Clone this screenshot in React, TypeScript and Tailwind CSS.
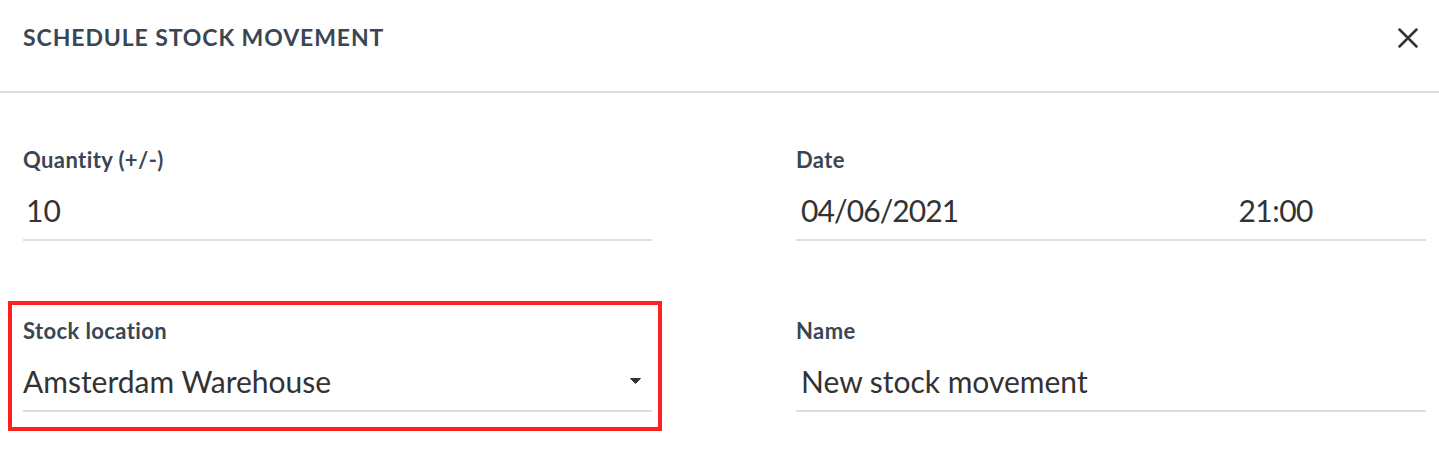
const font = { fontFamily: "Lato, 'Open Sans', sans-serif" };

function Field({ label, children }: { label: string; children: React.ReactNode }) {
  return (
    <div className="flex flex-col">
      <label className="text-[22px] font-bold leading-[24px] tracking-[0.4px] text-[#3a4654]">{label}</label>
      <div className="mt-[20px] flex h-[49px] items-center border-b-2 border-[#dedede] pb-[11px] text-[30px] leading-[36px] text-[#333]">
        {children}
      </div>
    </div>
  );
}

export default function App() {
  return (
    <div className="h-[466px] w-[1439px] bg-white" style={font}>
      {/* Header */}
      <div className="flex h-[93px] items-center justify-between border-b-2 border-[#dedede] pl-[23px] pr-[21px]">
        <h2 className="pb-[16px] text-[23px] font-bold uppercase tracking-[0.9px] text-[#3a4654]">
          Schedule stock movement
        </h2>
        <button className="pb-[16px] text-[#333]">
          <svg width="20" height="20" viewBox="0 0 20 20" fill="none" stroke="currentColor" strokeWidth="2.5" strokeLinecap="round">
            <path d="M1.5 1.5l17 17M18.5 1.5l-17 17" />
          </svg>
        </button>
      </div>

      {/* Body */}
      <div className="grid grid-cols-[629px_630px] gap-x-[144px] gap-y-[78px] pl-[23px] pt-[55px]">
        <Field label="Quantity (+/-)">
          <span className="pl-[3px]">10</span>
        </Field>
        <Field label="Date">
          <span className="pl-[5px] tracking-[-0.9px]">04/06/2021</span>
          <span className="ml-auto pr-[113px] tracking-[-0.5px]">21:00</span>
        </Field>

        <div className="relative">
          <Field label="Stock location">
            <span>Amsterdam Warehouse</span>
            <svg className="ml-auto mr-[11px]" width="11" height="6" viewBox="0 0 11 6">
              <path d="M0.5 0.5h10L5.5 5.5z" fill="#333" stroke="#333" strokeLinejoin="round" />
            </svg>
          </Field>
          {/* highlight annotation */}
          <div className="pointer-events-none absolute -left-[15px] -right-[10px] -top-[18px] -bottom-[19px] border-[4px] border-[#ff2020]" />
        </div>
        <Field label="Name">
          <span className="pl-[5px]">New stock movement</span>
        </Field>
      </div>
    </div>
  );
}
